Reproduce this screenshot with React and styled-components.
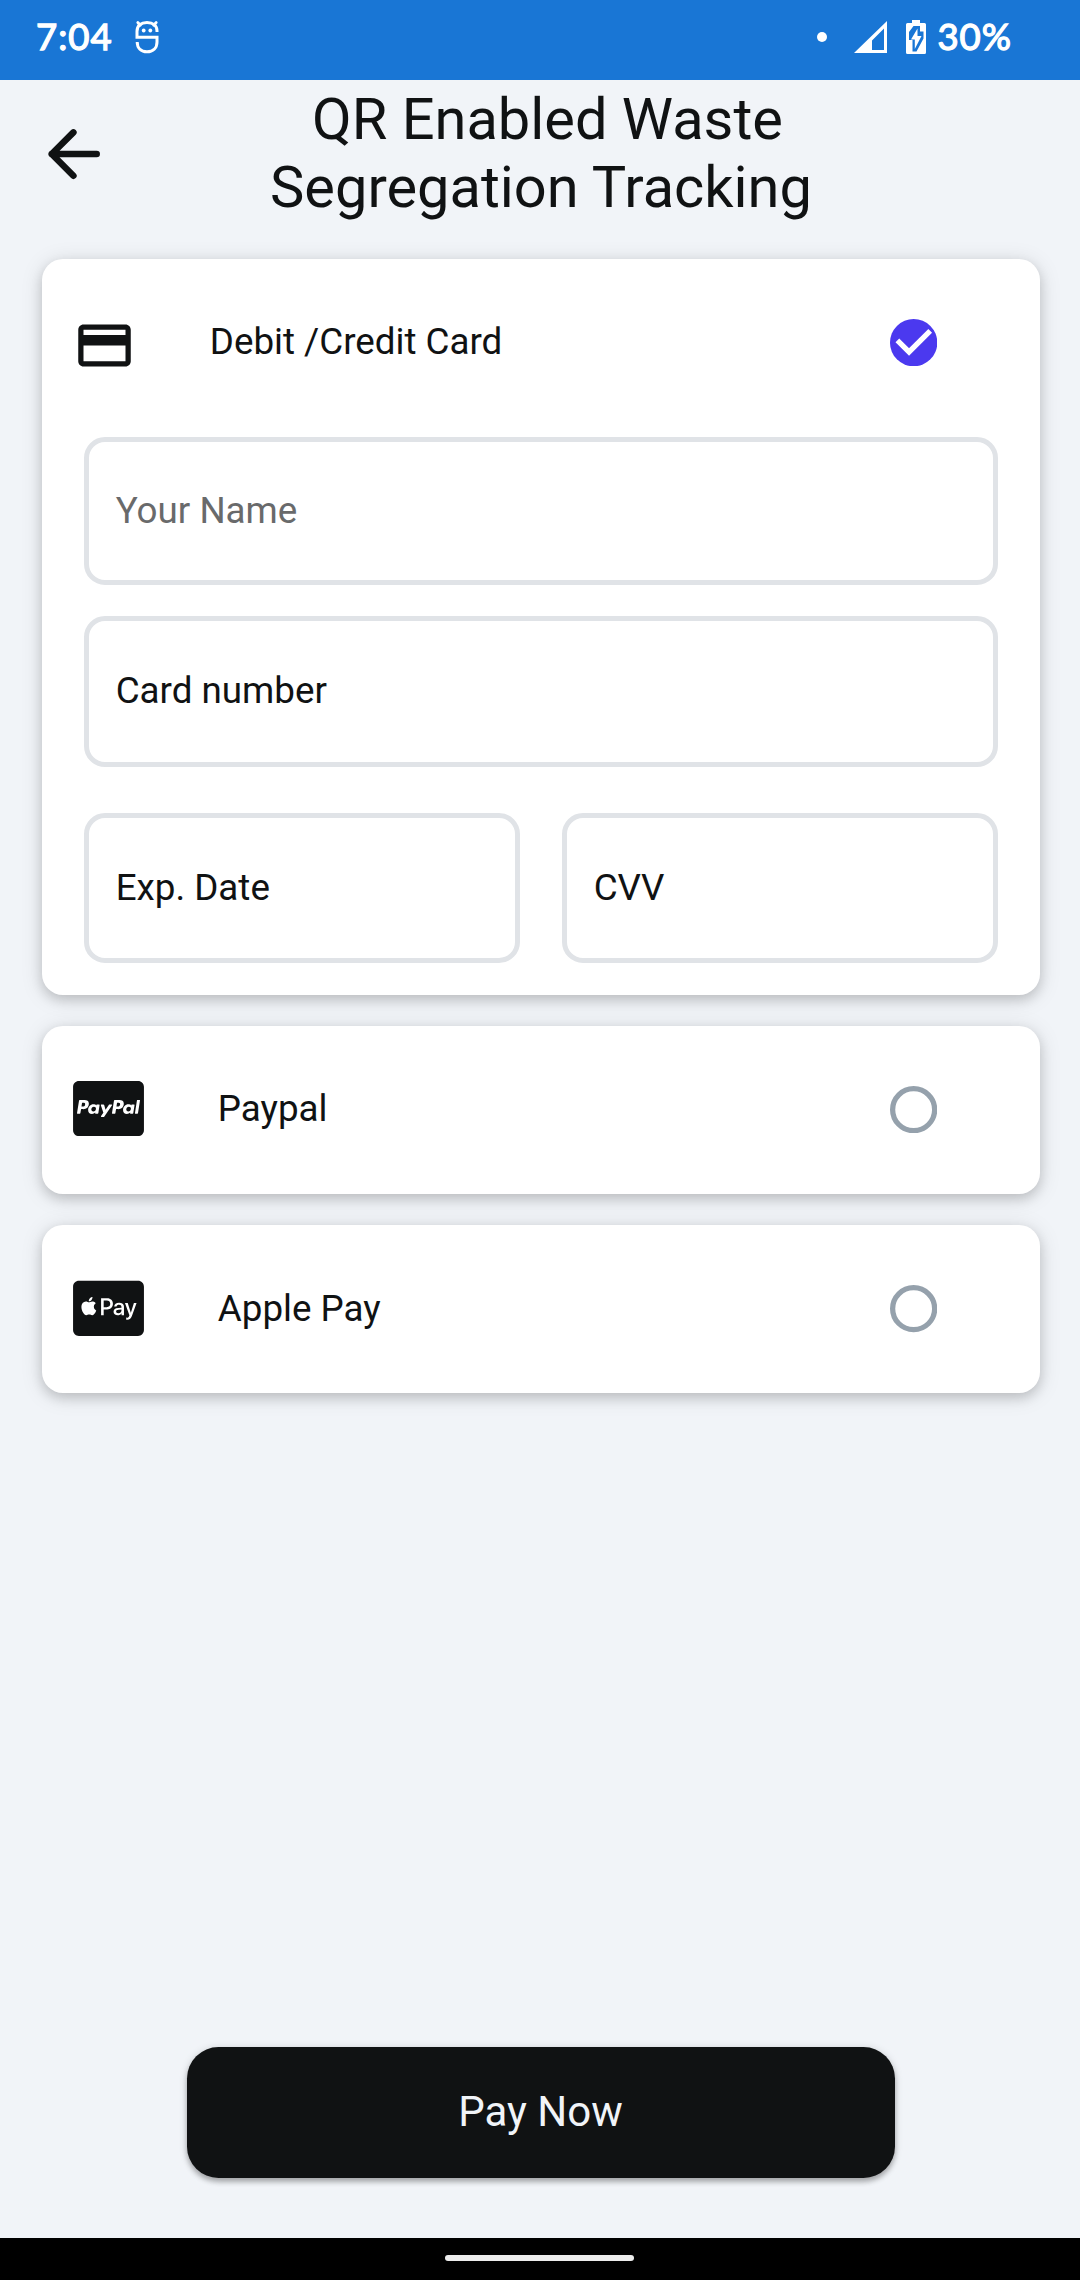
import React, { useState } from "react";
import styled, { createGlobalStyle } from "styled-components";
import { MdPayment } from "react-icons/md";
import { FaCcPaypal, FaCcApplePay } from "react-icons/fa";

const ink = "#101213";
const surface = "#f1f4f8";

const GlobalStyle = createGlobalStyle`
  * { box-sizing: border-box; }
  body { margin: 0; background: ${surface}; }
`;

const Screen = styled.div`
  width: 1080px;
  height: 2280px;
  display: flex;
  flex-direction: column;
  background: ${surface};
  color: ${ink};
  font-family: Roboto, "Liberation Sans", sans-serif;
  font-size: 36.75px;
  overflow: hidden;
`;

const StatusBar = styled.header`
  flex: none;
  height: 80px;
  padding: 0 68px 6px 36px;
  display: flex;
  align-items: center;
  justify-content: space-between;
  background: #1976d5;
  color: #fff;
`;

const StatusGroup = styled.div`
  display: flex;
  align-items: center;
  height: 74px;
`;

const StatusText = styled.span`
  font-family: Lato, "Liberation Sans", sans-serif;
  font-weight: 400;
  -webkit-text-stroke: 1.3px #fff;
  font-size: 36.5px;
  line-height: 72px;
  padding-bottom: 2px;
  letter-spacing: ${(p) => p.$spacing}px;
`;

const Glyph = styled.svg`
  display: block;
  flex: none;
  margin-left: ${(p) => p.$gap || 0}px;
  margin-right: ${(p) => p.$after || 0}px;
`;

const AppBar = styled.div`
  flex: none;
  height: 178.5px;
  padding: 5.3px 0 0 35px;
  display: grid;
  grid-template-columns: 79px 853px;
  align-items: start;
`;

const BackButton = styled.button`
  margin: 29.4px 0 0;
  padding: 0;
  border: 0;
  background: none;
  color: ${ink};
  display: flex;
`;

const Title = styled.h1`
  margin: 0;
  padding: 0;
  text-align: center;
  font-weight: 400;
  font-size: 57.75px;
  line-height: 68px;
`;

const TitleLine = styled.span`
  display: block;
  padding-left: ${(p) => p.$indent || 0}px;
`;

const Methods = styled.main`
  flex: 1;
  padding: 0 40px 0 42px;
  display: flex;
  flex-direction: column;
  gap: 31.3px;
`;

const Card = styled.section`
  background: #fff;
  border-radius: 21px;
  height: ${(p) => p.$height}px;
  box-shadow: 0 5px 12px rgba(0, 0, 0, 0.14), 0 3px 22px rgba(0, 0, 0, 0.13);
`;

const MethodRow = styled.div`
  height: 168px;
  padding: 0 102.7px 0 30.8px;
  display: grid;
  grid-template-columns: ${(p) => p.$labelOffset}px 1fr auto;
  align-items: center;
`;

const MethodIcon = styled.span`
  display: flex;
  padding-top: ${(p) => p.$drop || 0}px;
  padding-bottom: ${(p) => p.$lift || 0}px;
  padding-left: ${(p) => p.$inset || 0}px;

  svg {
    width: ${(p) => p.$width}px;
    height: 63px;
  }
`;

const MethodLabel = styled.span`
  line-height: 44px;
  padding-bottom: 1px;
`;

const RadioButton = styled.button`
  width: 47.3px;
  height: 47.3px;
  padding: 0;
  border: 0;
  background: none;
  display: flex;
`;

const Fields = styled.div`
  padding: 10.5px 42px 0;
  display: flex;
  flex-direction: column;
`;

const Field = styled.div`
  flex: 1 0 auto;
  height: ${(p) => p.$height}px;
  border: 5.25px solid #e0e3e7;
  border-radius: 21px;
  padding: 0 26.7px ${(p) => p.$lift || 0.5}px;
  display: flex;
  align-items: center;
  color: ${(p) => (p.$muted ? "#696a6b" : ink)};
`;

const FieldPair = styled.div`
  display: grid;
  grid-template-columns: 1fr 1fr;
  gap: 42px;
  margin-top: 46.7px;
`;

const NameField = styled(Field)`
  margin-bottom: 31.4px;
`;

const Footer = styled.footer`
  flex: none;
  height: 191px;
  display: flex;
  justify-content: center;
  align-items: flex-start;
  padding-left: 2px;
`;

const PayButton = styled.button`
  width: 708px;
  height: 131px;
  padding: 0 1px 2px 0;
  border: 0;
  border-radius: 31.5px;
  background: ${ink};
  color: #f1f4f8;
  font: 400 42px/50px Roboto, "Liberation Sans", sans-serif;
  box-shadow: 0 4px 5px rgba(0, 0, 0, 0.25), 0 1px 8px rgba(0, 0, 0, 0.14);
`;

const NavBar = styled.nav`
  flex: none;
  height: 42px;
  background: #000;
  display: flex;
  justify-content: center;
  padding: 17px 1px 0 0;
`;

const NavPill = styled.span`
  width: 189px;
  height: 6px;
  border-radius: 3px;
  background: #ececec;
`;

function MascotIcon() {
  return (
    <Glyph $gap={22.5} width="24" height="34" viewBox="0 0 24 34" fill="none">
      <path
        d="M22 12v-1C22 5.500 18 2.500 12 2.500S2 5.500 2 11.500v5.800h20V22c0 6-4 9.800-10 9.800S2.200 28 2.200 22"
        stroke="#fff"
        strokeWidth="3"
      />
      <path d="M2.800 2.500l2.500 2.800M21.200 2.500l-2.500 2.800" stroke="#fff" strokeWidth="2.800" strokeLinecap="round" />
      <circle cx="8.700" cy="10.500" r="1.900" fill="#fff" />
      <circle cx="15.300" cy="10.500" r="1.900" fill="#fff" />
    </Glyph>
  );
}

function DotIcon() {
  return (
    <Glyph $after={27} width="10" height="10" viewBox="0 0 10 10">
      <circle cx="5" cy="5" r="5" fill="#fff" />
    </Glyph>
  );
}

function SignalIcon() {
  return (
    <Glyph $after={19} width="33" height="32" viewBox="0 0 33 32">
      <path d="M33 0v32H0zM30 7.500L18 19.500V29h12z" fill="#fff" fillRule="evenodd" />
    </Glyph>
  );
}

function BatteryIcon() {
  return (
    <Glyph $after={11} width="20" height="34" viewBox="0 0 20 34">
      <path
        d="M6 0h8v3h4.500q1.500 0 1.500 1.500v28q0 1.500-1.500 1.500h-17q-1.500 0-1.500-1.500v-28Q0 3 1.500 3H6z"
        fill="#fff"
      />
      <path d="M7.500 6h6.500v5.500h3.500v7L10.500 31.500H6.500V20H3V12z" fill="#1976d5" />
      <path d="M11.500 8.500v7.500h4L8.800 29v-9.500H5z" fill="#fff" />
    </Glyph>
  );
}

function Radio({ checked, onSelect }) {
  return (
    <RadioButton onClick={onSelect} role="radio" aria-checked={checked}>
      {checked ? (
        <svg width="47.3" height="47.3" viewBox="0 0 18 18">
          <circle cx="9" cy="9" r="9" fill="#4b39ef" />
          <path d="M2.800 8.100L7.250 12.550L15.300 4.500" fill="none" stroke="#fff" strokeWidth="2" />
        </svg>
      ) : (
        <svg width="47.3" height="47.3" viewBox="0 0 18 18">
          <circle cx="9" cy="9" r="8" fill="none" stroke="#95a1ac" strokeWidth="2" />
        </svg>
      )}
    </RadioButton>
  );
}

export default function App() {
  const [method, setMethod] = useState("card");

  return (
    <>
      <GlobalStyle />
      <Screen>
        <StatusBar>
          <StatusGroup>
            <StatusText $spacing={1}>7:04</StatusText>
            <MascotIcon />
          </StatusGroup>
          <StatusGroup>
            <DotIcon />
            <SignalIcon />
            <BatteryIcon />
            <StatusText $spacing={1}>30%</StatusText>
          </StatusGroup>
        </StatusBar>

        <AppBar>
          <BackButton aria-label="Back">
            <svg width="78.75" height="78.75" viewBox="0 0 24 24" fill="none">
              <path
                d="M18.800 11.900H5.100M11.700 5.300L5.100 11.900L11.700 18.500"
                stroke="currentColor"
                strokeWidth="2"
                strokeLinecap="round"
                strokeLinejoin="round"
              />
            </svg>
          </BackButton>
          <Title>
            <TitleLine $indent={14}>QR Enabled Waste</TitleLine>
            <TitleLine $indent={1}>Segregation Tracking</TitleLine>
          </Title>
        </AppBar>

        <Methods>
          <Card $height={736}>
            <MethodRow $labelOffset={137}>
              <MethodIcon $drop={6} $width={63}>
                <MdPayment />
              </MethodIcon>
              <MethodLabel>Debit /Credit Card</MethodLabel>
              <Radio checked={method === "card"} onSelect={() => setMethod("card")} />
            </MethodRow>
            <Fields>
              <NameField $height={148} $lift={2} $muted>
                Your Name
              </NameField>
              <Field $height={150.3} $lift={2}>
                Card number
              </Field>
              <FieldPair>
                <Field $height={149.7}>Exp. Date</Field>
                <Field $height={149.7}>CVV</Field>
              </FieldPair>
            </Fields>
          </Card>

          <Card $height={168}>
            <MethodRow $labelOffset={145}>
              <MethodIcon $width={71} $lift={2.5} $inset={0.7}>
                <FaCcPaypal />
              </MethodIcon>
              <MethodLabel>Paypal</MethodLabel>
              <Radio checked={method === "paypal"} onSelect={() => setMethod("paypal")} />
            </MethodRow>
          </Card>

          <Card $height={168.4}>
            <MethodRow $labelOffset={145}>
              <MethodIcon $width={71} $lift={1.6} $inset={0.7}>
                <FaCcApplePay />
              </MethodIcon>
              <MethodLabel>Apple Pay</MethodLabel>
              <Radio checked={method === "apple"} onSelect={() => setMethod("apple")} />
            </MethodRow>
          </Card>
        </Methods>

        <Footer>
          <PayButton>Pay Now</PayButton>
        </Footer>
        <NavBar>
          <NavPill />
        </NavBar>
      </Screen>
    </>
  );
}
